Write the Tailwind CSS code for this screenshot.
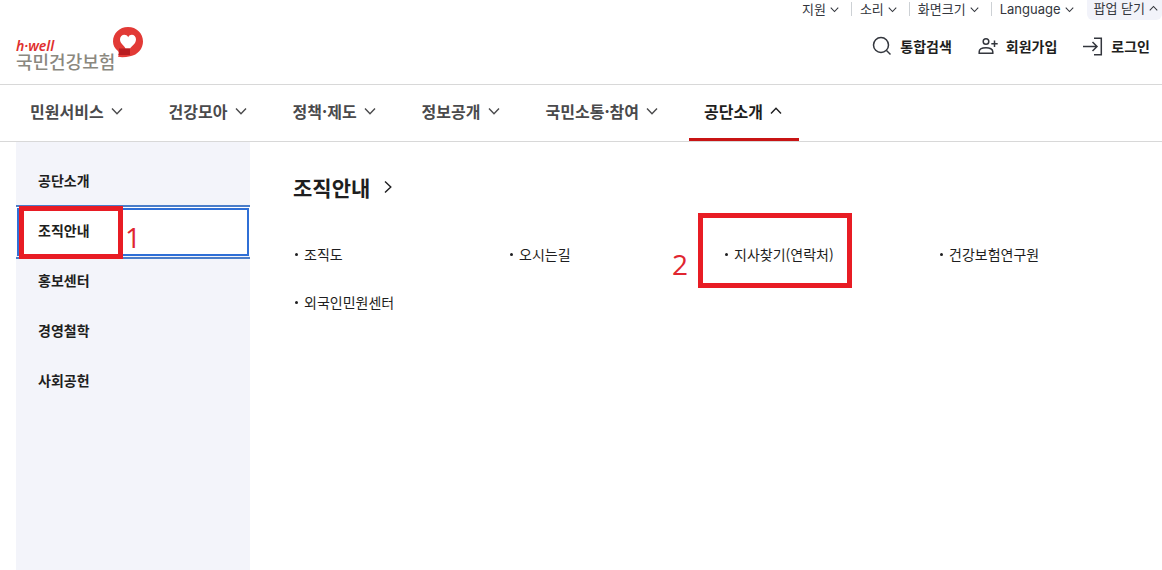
<!DOCTYPE html>
<html lang="ko">
<head>
  <meta charset="UTF-8">
  <meta name="viewport" content="width=device-width, initial-scale=1.0">
  <title>국민건강보험 - 조직안내</title>
  <script src="https://cdn.jsdelivr.net/npm/@tailwindcss/browser@4"></script>
</head>
<body class="flex flex-col min-h-screen bg-white text-[#1e1e20] font-['Noto_Sans_CJK_KR',sans-serif]">

  <!-- Icons -->
  <svg class="hidden" aria-hidden="true">
    <symbol id="down" viewBox="0 0 12 12"><path d="M1 3.5 6 8.7 11 3.5" fill="none" stroke="currentColor" stroke-width="1.4"/></symbol>
    <symbol id="up" viewBox="0 0 12 12"><path d="M1 8.5 6 3.3 11 8.5" fill="none" stroke="currentColor" stroke-width="1.4"/></symbol>
  </svg>

  <!-- Header -->
  <header class="flex justify-between h-[85px] border-b border-[#d8d8d8]">
    <a href="#" class="flex items-start pl-4 pt-[26px]" aria-label="국민건강보험 홈">
      <span class="flex flex-col pt-3">
        <span class="text-[14px] leading-4 font-semibold italic text-[#e0302e] font-['Noto_Sans',sans-serif]">h·well</span>
        <span class="text-[18px] leading-[14px] font-medium text-[#8b887f]">국민건강보험</span>
      </span>
      <svg class="w-8 h-8 -ml-[3px]" viewBox="0 0 32 32">
        <path d="M16 1C7.500 1 1 7.300 1 15.500c0 4 1.800 7 5 9.500 1 1.500 1 3.500 0 5.800 4 .7 8 .3 12-.6C26 29 31 22.500 31 15.500 31 7.300 24.500 1 16 1Z" fill="#e23a36"/>
        <path d="M7 23h11v6H6.300c.9-2 1.100-4 .7-6Z" fill="#b81c20"/>
        <path d="M16.200 11.200C14 7 8 8.500 8 13.300c0 4.200 3.500 5.200 5.500 9.200h4.500c2-2.500 6-4.800 6-9.200 0-4.800-5.800-6.300-7.800-2.100Z" fill="#fff"/>
        <path d="M7 22.500h11v1.500H7Z" fill="#b81c20"/>
      </svg>
    </a>

    <div class="flex flex-col items-end">
      <!-- Utility menu -->
      <div class="flex items-start text-[13px] leading-[18px] text-[#33363d]">
        <button class="flex items-center gap-1 pr-3">지원<svg class="w-[9px] h-[9px]"><use href="#down"/></svg></button>
        <button class="flex items-center gap-1 pl-[9px] pr-3 relative before:absolute before:left-0 before:top-[2px] before:h-[14px] before:w-px before:bg-[#cdd1d5]">소리<svg class="w-[9px] h-[9px]"><use href="#down"/></svg></button>
        <button class="flex items-center gap-1 pl-[9px] pr-3 relative before:absolute before:left-0 before:top-[2px] before:h-[14px] before:w-px before:bg-[#cdd1d5]">화면크기<svg class="w-[9px] h-[9px]"><use href="#down"/></svg></button>
        <button class="flex items-center gap-1 pl-[9px] pr-[13px] relative font-['Inter',sans-serif] before:absolute before:left-0 before:top-[2px] before:h-[14px] before:w-px before:bg-[#cdd1d5]">Language<svg class="w-[9px] h-[9px]"><use href="#down"/></svg></button>
        <button class="flex items-center gap-1 pl-[7px] pr-1 pb-1 bg-[#f2f3fa] rounded-b-md leading-4">팝업 닫기<svg class="w-[9px] h-[9px]"><use href="#up"/></svg></button>
      </div>

      <!-- Member menu -->
      <div class="flex gap-[26px] pt-[14px] pr-3 text-[14px] leading-6 font-bold">
        <a href="#" class="flex items-center gap-2">
          <svg class="w-5 h-5" viewBox="0 0 20 20" fill="none" stroke="#33363d" stroke-width="1.500"><circle cx="9" cy="9" r="7.500"/><path d="m14.500 14.500 4 4"/></svg>통합검색
        </a>
        <a href="#" class="flex items-center gap-2">
          <svg class="w-5 h-5" viewBox="0 0 20 20" fill="none" stroke="#33363d" stroke-width="1.500"><circle cx="8" cy="5.500" r="2.800"/><path d="M1.200 17.200v-1.500c0-2.600 3-4 6.800-4s6.800 1.400 6.800 4v1.500ZM16.500 4.500v6.500M13.300 7.700h6.400"/></svg>회원가입
        </a>
        <a href="#" class="flex items-center gap-2">
          <svg class="w-5 h-5" viewBox="0 0 20 20" fill="none" stroke="#33363d" stroke-width="1.500"><path d="M0 10.500h14M9.500 6 14 10.500 9.500 15M11 2.300h7.300v16.400H11"/></svg>로그인
        </a>
      </div>
    </div>
  </header>

  <!-- Main navigation -->
  <nav class="flex gap-[14px] pl-[15px] h-[57px] border-b border-[#d8d8d8] text-base font-bold text-[#4a4a4c]">
    <button class="flex items-center gap-[7px] pl-[15px] pr-[17px] pb-px border-b-[3px] border-transparent">민원서비스<svg class="w-3 h-3"><use href="#down"/></svg></button>
    <button class="flex items-center gap-[7px] pl-[15px] pr-[17px] pb-px border-b-[3px] border-transparent">건강모아<svg class="w-3 h-3"><use href="#down"/></svg></button>
    <button class="flex items-center gap-[7px] pl-[15px] pr-[17px] pb-px border-b-[3px] border-transparent">정책·제도<svg class="w-3 h-3"><use href="#down"/></svg></button>
    <button class="flex items-center gap-[7px] pl-[15px] pr-[17px] pb-px border-b-[3px] border-transparent">정보공개<svg class="w-3 h-3"><use href="#down"/></svg></button>
    <button class="flex items-center gap-[7px] pl-[15px] pr-[17px] pb-px border-b-[3px] border-transparent">국민소통·참여<svg class="w-3 h-3"><use href="#down"/></svg></button>
    <button class="flex items-center gap-[7px] pl-[15px] pr-[17px] pb-px border-b-[3px] border-[#c81414] text-[#1e1e20]" aria-expanded="true">공단소개<svg class="w-3 h-3"><use href="#up"/></svg></button>
  </nav>

  <div class="flex flex-1 pl-4">
    <!-- Side menu -->
    <aside class="w-[234px] shrink-0 pt-[13px] bg-[#f3f4fa] text-[14px] font-bold">
      <button class="block w-full h-[50px] pl-[22px] text-left">공단소개</button>
      <div class="relative">
        <button class="block w-full h-[50px] pl-[22px] text-left bg-white">조직안내</button>
        <!-- Focus ring -->
        <span class="absolute inset-x-0 top-0 -bottom-1 p-px border-y-2 border-[#4a7dc9]"><span class="block h-full border-2 border-[#2f6fd6]"></span></span>
        <!-- Step 1 -->
        <span class="absolute left-[3px] top-px -bottom-1 w-[104px] border-5 border-[#e81c24]"></span>
        <span class="absolute left-[109px] top-3 text-[28px] leading-10 font-normal text-[#e02530] font-['Open_Sans',sans-serif]">1</span>
      </div>
      <button class="block w-full h-[50px] pl-[22px] text-left">홍보센터</button>
      <button class="block w-full h-[50px] pl-[22px] text-left">경영철학</button>
      <button class="block w-full h-[50px] pl-[22px] text-left">사회공헌</button>
    </aside>

    <!-- Sub menu -->
    <main class="flex-1 pl-[43px] pr-[9px] pt-[29px]">
      <h2 class="text-[21px] leading-8 font-bold">
        <a href="#" class="inline-flex items-center gap-3">조직안내
          <svg class="w-3 h-3" viewBox="0 0 12 12"><path d="M3 .5 8.800 6 3 11.500" fill="none" stroke="currentColor" stroke-width="1.400"/></svg>
        </a>
      </h2>
      <ul class="grid grid-cols-4 gap-y-6 pt-[39px] text-[14px] leading-6">
        <li class="flex items-center gap-[6px] pl-[2px] before:size-[3px] before:rounded-full before:bg-[#1e1e20]"><a href="#">조직도</a></li>
        <li class="flex items-center gap-[6px] pl-[2px] before:size-[3px] before:rounded-full before:bg-[#1e1e20]"><a href="#">오시는길</a></li>
        <li class="relative flex items-center gap-[6px] pl-[2px] before:size-[3px] before:rounded-full before:bg-[#1e1e20]">
          <a href="#">지사찾기(연락처)</a>
          <!-- Step 2 -->
          <span class="absolute -left-[25px] -top-[29px] w-[154px] h-[75px] border-5 border-[#e81c24]"></span>
          <span class="absolute -left-[51px] top-[2px] text-[28px] leading-10 font-normal text-[#e02530] font-['Open_Sans',sans-serif]">2</span>
        </li>
        <li class="flex items-center gap-[6px] pl-[2px] before:size-[3px] before:rounded-full before:bg-[#1e1e20]"><a href="#">건강보험연구원</a></li>
        <li class="flex items-center gap-[6px] pl-[2px] before:size-[3px] before:rounded-full before:bg-[#1e1e20]"><a href="#">외국인민원센터</a></li>
      </ul>
    </main>
  </div>

</body>
</html>
